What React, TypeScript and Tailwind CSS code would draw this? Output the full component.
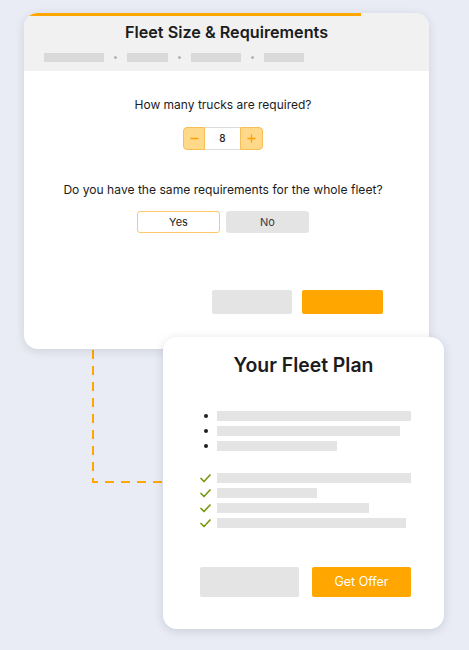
import React from 'react'

const crumbs = [60, 41, 50, 40]
const bullets = [194, 183, 120]
const checks = [194, 100, 152, 189]

const Check: React.FC = () => (
  <svg width="11" height="9" viewBox="0 0 11 9" fill="none">
    <path d="M1 4.5 L4 7.5 L10 1" stroke="#7a9a14" strokeWidth="1.7" strokeLinecap="round" strokeLinejoin="round" />
  </svg>
)

const App: React.FC = () => {
  return (
    <div className="relative w-[469px] h-[650px] overflow-hidden bg-[#e9ecf4] pt-[13px]" style={{ fontFamily: 'Inter, "Noto Sans", sans-serif' }}>
      {/* dashed connector between the two cards */}
      <svg className="absolute left-0 top-0" width="469" height="650">
        <path d="M93 350 V482 H163" stroke="#ffa600" strokeWidth="2" strokeDasharray="9 7" fill="none" />
      </svg>

      {/* step card */}
      <div className="relative ml-[24px] w-[405px] h-[336px] bg-white rounded-[14px] overflow-hidden shadow-[0_2px_10px_rgba(40,50,80,0.14)]">
        <div className="absolute left-0 top-0 h-[3px] w-[337px] bg-[#ffa600]" />
        <div className="bg-[#f1f1f1] h-[58px] pt-[7px] pl-[20px]">
          <h2 className="text-center text-[16.2px] leading-[24px] font-semibold text-[#1c1c1c] -ml-[20px]">Fleet Size &amp; Requirements</h2>
          <div className="mt-[9px] flex items-center gap-[10px]">
            {crumbs.map((w, i) => (
              <React.Fragment key={i}>
                {i > 0 && <span className="w-[3px] h-[3px] rounded-full bg-[#b4b4b4]" />}
                <span className="h-[9px] bg-[#d9d9d9]" style={{ width: w }} />
              </React.Fragment>
            ))}
          </div>
        </div>

        <div className="flex flex-col items-center pr-[7px]">
          <p className="mt-[25px] text-[12px] leading-[18px] text-[#1c1c1c]">How many trucks are required?</p>
          <div className="mt-[13px] flex h-[23px]">
            <button className="w-[22px] h-full flex items-center justify-center bg-[#ffd98a] border border-[#f7be55] rounded-l-[4px]">
              <svg width="9" height="9" viewBox="0 0 9 9"><path d="M0.5 4.5 H8.5" stroke="#ff9f00" strokeWidth="1.3" /></svg>
            </button>
            <div className="w-[35px] h-full flex items-center justify-center bg-white border-y border-[#dcdcdc] text-[10px] font-medium text-[#1c1c1c]">8</div>
            <button className="w-[23px] h-full flex items-center justify-center bg-[#ffd98a] border border-[#f7be55] rounded-r-[4px]">
              <svg width="9" height="9" viewBox="0 0 9 9"><path d="M0.5 4.5 H8.5 M4.5 0.5 V8.5" stroke="#ff9f00" strokeWidth="1.3" /></svg>
            </button>
          </div>
          <p className="mt-[31px] text-[12.1px] leading-[18px] text-[#1c1c1c]">Do you have the same requirements for the whole fleet?</p>
          <div className="mt-[12px] flex gap-[6px]">
            <button className="w-[83px] h-[22px] rounded-[3px] border border-[#fbc96a] bg-white text-[11px] text-[#1c1c1c]">Yes</button>
            <button className="w-[83px] h-[22px] rounded-[3px] bg-[#e4e4e4] text-[11px] text-[#3a3a3a]">No</button>
          </div>
        </div>

        <div className="mt-[57px] flex justify-end gap-[10px] pr-[46px]">
          <span className="w-[80px] h-[24px] rounded-[2px] bg-[#e4e4e4]" />
          <span className="w-[81px] h-[24px] rounded-[2px] bg-[#ffa600]" />
        </div>
      </div>

      {/* plan card */}
      <div className="relative -mt-[12px] ml-[163px] w-[281px] h-[292px] bg-white rounded-[14px] shadow-[0_2px_10px_rgba(40,50,80,0.16)] pt-[14px] pl-[37px] pr-[33px]">
        <h2 className="text-center text-[19.4px] leading-[28px] font-semibold text-[#1c1c1c] -ml-[4px]">Your Fleet Plan</h2>

        <ul className="mt-[32px] flex flex-col gap-[5px]">
          {bullets.map((w, i) => (
            <li key={i} className="flex items-center h-[10px]">
              <span className="w-[17px] flex">
                <span className="ml-[4px] w-[4px] h-[4px] rounded-full bg-[#1f1f1f]" />
              </span>
              <span className="h-[10px] bg-[#e4e4e4]" style={{ width: w }} />
            </li>
          ))}
        </ul>

        <ul className="mt-[22px] flex flex-col gap-[5px]">
          {checks.map((w, i) => (
            <li key={i} className="flex items-center h-[10px]">
              <span className="w-[17px] flex"><Check /></span>
              <span className="h-[10px] bg-[#e4e4e4]" style={{ width: w }} />
            </li>
          ))}
        </ul>

        <div className="mt-[39px] flex justify-between">
          <span className="w-[99px] h-[30px] rounded-[2px] bg-[#e4e4e4]" />
          <button className="w-[99px] h-[30px] rounded-[2px] bg-[#ffa600] text-white text-[12.5px]">Get Offer</button>
        </div>
      </div>
    </div>
  )
}

export default App
